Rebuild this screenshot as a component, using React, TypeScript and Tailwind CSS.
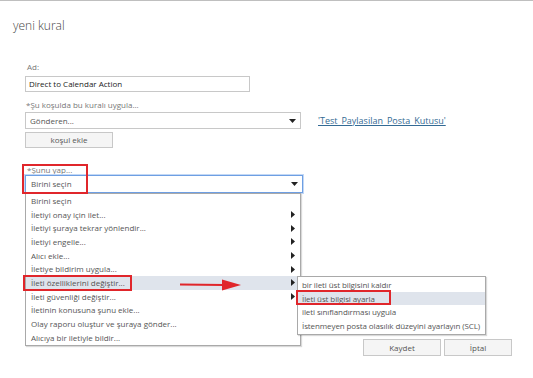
import React from "react";

const Caret = () => (
  <svg width="7" height="4" viewBox="0 0 7 4" className="shrink-0">
    <path d="M0 0h7L3.5 4z" fill="#222" />
  </svg>
);

const Right = () => (
  <svg width="4" height="7" viewBox="0 0 4 7" className="shrink-0">
    <path d="M0 0v7l4-3.5z" fill="#222" />
  </svg>
);

const items: { t: string; arrow?: boolean; hi?: boolean }[] = [
  { t: "Birini seçin" },
  { t: "İletiyi onay için ilet...", arrow: true },
  { t: "İletiyi şuraya tekrar yönlendir...", arrow: true },
  { t: "İletiyi engelle...", arrow: true },
  { t: "Alıcı ekle...", arrow: true },
  { t: "İletiye bildirim uygula...", arrow: true },
  { t: "İleti özelliklerini değiştir...", arrow: true, hi: true },
  { t: "İleti güvenliği değiştir...", arrow: true },
  { t: "İletinin konusuna şunu ekle..." },
  { t: "Olay raporu oluştur ve şuraya gönder..." },
  { t: "Alıcıya bir iletiyle bildir..." },
];

const sub: { t: string; hi?: boolean }[] = [
  { t: "bir ileti üst bilgisini kaldır" },
  { t: "İleti üst bilgisi ayarla", hi: true },
  { t: "ileti sınıflandırması uygula" },
  { t: "İstenmeyen posta olasılık düzeyini ayarlayın (SCL)" },
];

export default function App() {
  return (
    <div
      className="relative w-[533px] h-[378px] bg-white border-t border-[#bfbfbf] overflow-hidden text-[#555]"
      style={{ fontFamily: '"Open Sans", "Noto Sans", sans-serif' }}
    >
      <div className="pl-[13px] mt-[17px] h-[16px] text-[12px] leading-[16px] font-light text-[#444]">
        yeni kural
      </div>

      <div className="pl-[25px]">
        <div className="mt-[27px] pl-[2px] h-[12px] text-[8px] leading-[12px] text-[#777]">Ad:</div>
        <div className="mt-[3px] w-[225px] h-[16px] border border-[#c8c8c8] pl-[3px] text-[8px] leading-[14px] text-[#222] whitespace-nowrap">
          Direct to Calendar Action
        </div>

        <div className="mt-[7px] pl-[1px] h-[12px] text-[8px] leading-[12px] text-[#777]">
          *Şu koşulda bu kuralı uygula...
        </div>
        <div className="mt-[1px] flex items-center">
          <div className="w-[276px] h-[17px] border border-[#c8c8c8] flex items-center justify-between pl-[4px] pr-[4px] text-[8px] text-[#555]">
            <span>Gönderen...</span>
            <Caret />
          </div>
          <a className="ml-[17px] text-[9px] text-[#336a94] underline whitespace-nowrap">'Test_Paylasilan_Posta_Kutusu'</a>
        </div>

        <div className="mt-[3px] w-[88px] h-[16px] border border-[#c8c8c8] bg-[#f5f5f5] flex items-center justify-center text-[8px] text-[#555]">
          koşul ekle
        </div>

        <div className="mt-[16px] pl-[2px] h-[12px] text-[8px] leading-[12px] text-[#777]">*Şunu yap...</div>
        <div className="relative mt-[-1px] w-[278px]">
          <div className="h-[18px] border border-[#6e9fe3] shadow-[0_0_0_1px_#c3d8f5] flex items-center justify-between pl-[5px] pr-[4px] text-[8px] text-[#555] bg-white">
            <span>Birini seçin</span>
            <Caret />
          </div>
          <div className="absolute left-0 top-full w-[276px] border border-[#a9a9a9] bg-white shadow-[1px_1px_1px_rgba(0,0,0,0.15)] z-10">
            {items.map((it) => (
              <div
                key={it.t}
                className={
                  "h-[13.7px] flex items-center justify-between pl-[5px] pr-[5px] text-[8px] text-[#555] whitespace-nowrap " +
                  (it.hi ? "bg-[#dfe4ec]" : "")
                }
              >
                <span>{it.t}</span>
                {it.arrow ? <Right /> : null}
              </div>
            ))}
            <div className="absolute left-[271px] top-[82px] w-[189px] border border-[#a9a9a9] bg-white shadow-[1px_1px_1px_rgba(0,0,0,0.15)] py-[1px]">
              {sub.map((s) => (
                <div
                  key={s.t}
                  className={
                    "h-[13.7px] flex items-center pl-[4px] text-[8px] text-[#555] whitespace-nowrap tracking-[-0.1px] " +
                    (s.hi ? "bg-[#dfe4ec]" : "")
                  }
                >
                  {s.t}
                </div>
              ))}
            </div>
          </div>
        </div>
      </div>

      <div className="flex justify-end gap-[3px] pr-[21px] mt-[146px]">
        <div className="w-[78px] h-[17px] border border-[#c8c8c8] bg-[#f5f5f5] flex items-center justify-center text-[8px] text-[#555]">
          Kaydet
        </div>
        <div className="w-[68px] h-[17px] border border-[#c8c8c8] bg-[#f5f5f5] flex items-center justify-center text-[8px] text-[#555]">
          İptal
        </div>
      </div>

      {/* annotations */}
      <div className="absolute left-[22px] top-[163px] w-[66px] h-[30px] border-[2px] border-[#e0262b] z-20" />
      <div className="absolute left-[23px] top-[274px] w-[109px] h-[16px] border-[2px] border-[#e0262b] z-20" />
      <div className="absolute left-[296px] top-[289px] w-[95px] h-[15px] border-[2px] border-[#e0262b] z-20" />
      <svg className="absolute left-[178px] top-[277px] z-20" width="64" height="14" viewBox="0 0 64 14">
        <path d="M2 6.5 L46 7" stroke="#e0262b" strokeWidth="2" />
        <path d="M44 1.5 L63 7 L44 12.5 Z" fill="#e0262b" />
      </svg>
    </div>
  );
}
